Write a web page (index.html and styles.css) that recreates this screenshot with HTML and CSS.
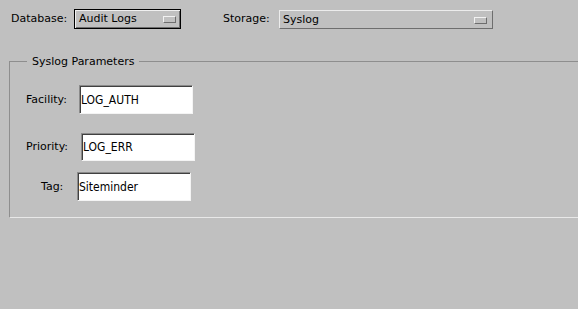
FILE: index.html
```html
<!DOCTYPE html>
<html>
<head>
<meta charset="utf-8">
<link rel="stylesheet" href="styles.css">
</head>
<body>
<div class="toolbar">
  <span class="lbl lbl-db">Database:</span>
  <div class="select select-db"><span class="select-text">Audit Logs</span><i class="select-btn"></i></div>
  <span class="lbl lbl-st">Storage:</span>
  <div class="select select-st"><span class="select-text">Syslog</span><i class="select-btn"></i></div>
</div>
<fieldset class="group">
  <legend class="group-title">Syslog Parameters</legend>
  <div class="row row-facility">
    <span class="lbl field-lbl">Facility:</span>
    <div class="field">LOG_AUTH</div>
  </div>
  <div class="row row-priority">
    <span class="lbl field-lbl">Priority:</span>
    <div class="field field-short">LOG_ERR</div>
  </div>
  <div class="row row-tag">
    <span class="lbl field-lbl">Tag:</span>
    <div class="field">Siteminder</div>
  </div>
</fieldset>
</body>
</html>
```
FILE: styles.css
```css
html, body {
  margin: 0;
  padding: 0;
  background: #c0c0c0;
  overflow: hidden;
}
body {
  width: 578px;
  height: 309px;
  font-family: "DejaVu Sans", sans-serif;
  font-size: 11px;
  color: #000;
}
.toolbar {
  display: flex;
  align-items: flex-start;
  padding: 9px 0 0 11px;
}
.lbl {
  line-height: 20px;
  white-space: nowrap;
}
.lbl-db { width: 63px; }
.lbl-st { width: 56px; margin-left: 42px; }
.select {
  box-sizing: border-box;
  display: flex;
  align-items: center;
  justify-content: space-between;
  background: #c0c0c0;
}
.select-db {
  width: 107px;
  height: 20px;
  border: 1px solid #000;
  box-shadow: inset 1px 1px 0 #f0f0f0, inset -1px -1px 0 #6e6e6e;
  padding: 0 4px 0 4px;
}
.select-st {
  width: 214px;
  height: 19px;
  margin-top: 1px;
  border: 1px solid;
  border-color: #ececec #6e6e6e #6e6e6e #ececec;
  padding: 0 5px 0 3px;
}
.select-text {
  line-height: 16px;
}
.select-btn {
  box-sizing: border-box;
  display: block;
  width: 13px;
  height: 7px;
  border: 1px solid;
  border-color: #f2f2f2 #6e6e6e #6e6e6e #f2f2f2;
  margin-top: 1px;
}
.group {
  margin: 26px 0 0 9px;
  padding: 0 0 16px 0;
  border: 1px solid;
  border-right: none;
  border-color: #8e8e8e #e8e8e8 #e8e8e8 #8e8e8e;
  min-width: 0;
}
.group-title {
  margin-left: 17px;
  padding: 0 5px;
  line-height: 13px;
}
.row {
  display: flex;
  align-items: center;
}
.row-facility { margin-top: 17px; padding-left: 16px; }
.row-priority { margin-top: 19px; padding-left: 16px; }
.row-tag { margin-top: 11px; padding-left: 31px; }
.row-facility .field-lbl { width: 53px; }
.row-priority .field-lbl { width: 55px; }
.row-tag .field-lbl { width: 36px; }
.field {
  box-sizing: border-box;
  width: 114px;
  height: 29px;
  background: #fff;
  border-style: solid;
  border-width: 1px;
  border-color: #8a8a8a #f4f4f4 #f4f4f4 #8a8a8a;
  box-shadow: inset 1px 1px 0 #404040;
  padding-left: 1px;
  display: flex;
  align-items: center;
  font-family: "DejaVu Sans Condensed", "DejaVu Sans", sans-serif;
  font-stretch: condensed;
  font-size: 12px;
}
.field-short { height: 28px; }
```
